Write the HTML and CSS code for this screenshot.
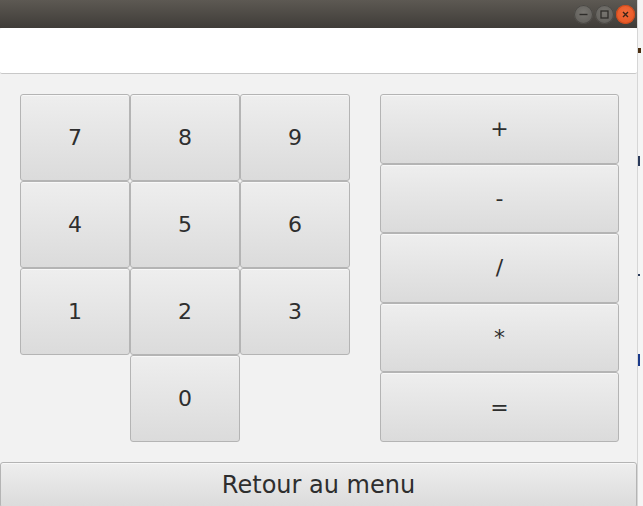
FILE: index.html
```html
<!DOCTYPE html>
<html>
<head>
<meta charset="utf-8">
<link rel="stylesheet" href="styles.css">
</head>
<body>
<div class="screen">
  <div class="window">
    <div class="titlebar">
      <span class="wbtn wmin"><svg width="19" height="19" viewBox="0 0 19 19"><line x1="5.5" y1="9.5" x2="13.5" y2="9.5" stroke="#2e2d2a" stroke-width="1.4"/></svg></span>
      <span class="wbtn wmax"><svg width="19" height="19" viewBox="0 0 19 19"><rect x="6" y="6" width="7" height="7" fill="none" stroke="#2e2d2a" stroke-width="1.3"/></svg></span>
      <span class="wbtn wclose"><svg width="19" height="19" viewBox="0 0 19 19"><path d="M7 7 L12 12 M12 7 L7 12" stroke="#3a2418" stroke-width="1.4"/></svg></span>
    </div>
    <div class="display"></div>
    <div class="main">
      <div class="numpad">
        <button class="btn">7</button>
        <button class="btn">8</button>
        <button class="btn">9</button>
        <button class="btn">4</button>
        <button class="btn">5</button>
        <button class="btn">6</button>
        <button class="btn">1</button>
        <button class="btn">2</button>
        <button class="btn">3</button>
        <button class="btn zero">0</button>
      </div>
      <div class="ops">
        <button class="btn">+</button>
        <button class="btn">-</button>
        <button class="btn">/</button>
        <button class="btn">*</button>
        <button class="btn">=</button>
      </div>
    </div>
    <button class="btn back">Retour au menu</button>
  </div>
  <div class="behind">
    <span class="mark m1"></span>
    <span class="mark m2"></span>
    <span class="mark m3"></span>
    <span class="mark m4"></span>
  </div>
</div>
</body>
</html>
```

FILE: styles.css
```css
html, body {
  margin: 0;
  padding: 0;
}
body {
  width: 643px;
  height: 506px;
  overflow: hidden;
  background: #f4f4f4;
  font-family: "DejaVu Sans", sans-serif;
}
.screen {
  display: flex;
  height: 506px;
}
.window {
  width: 637px;
  height: 506px;
  background: #f2f2f2;
  display: flex;
  flex-direction: column;
  flex: none;
}
.titlebar {
  height: 28px;
  flex: none;
  background: linear-gradient(#5d5953, #3f3c38);
  display: flex;
  justify-content: flex-end;
  align-items: center;
  gap: 2px;
  padding-right: 2px;
  box-sizing: border-box;
}
.wbtn {
  width: 19px;
  height: 19px;
  border-radius: 50%;
  display: flex;
  box-sizing: border-box;
}
.wmin, .wmax {
  background: radial-gradient(circle at 50% 40%, #777570, #5a5854);
  box-shadow: inset 0 0 0 1px #4a4844;
}
.wclose {
  background: radial-gradient(circle at 50% 40%, #f26b3a, #e2511f);
  box-shadow: inset 0 0 0 1px #c94a1e;
}
.display {
  height: 45px;
  flex: none;
  background: #ffffff;
  border-bottom: 1px solid #c8c8c8;
  border-radius: 2px;
}
.main {
  display: flex;
  padding: 20px 18px 0 20px;
  gap: 30px;
  height: 368px;
  box-sizing: border-box;
  flex: none;
}
.btn {
  margin: 0;
  border: 1px solid #b4b4b4;
  border-radius: 3px;
  background: linear-gradient(#eeeeee, #dbdbdb);
  box-shadow: inset 0 1px 0 #f8f8f8;
  color: #2e2e2e;
  font-family: "DejaVu Sans", sans-serif;
  font-size: 22px;
  padding: 0;
  box-sizing: border-box;
}
.numpad {
  display: grid;
  grid-template-columns: repeat(3, 110px);
  grid-template-rows: repeat(4, 87px);
}
.zero {
  grid-column: 2;
}
.ops {
  display: grid;
  grid-template-rows: repeat(5, 1fr);
  width: 239px;
  height: 348px;
}
.back {
  margin-top: 20px;
  height: 46px;
  width: 637px;
  font-size: 24px;
  padding-bottom: 0;
  flex: none;
}
.behind {
  flex: 1;
  border-left: 1px solid #d6d6d6;
  display: flex;
  flex-direction: column;
  align-items: flex-start;
  background: #f5f5f5;
}
.mark {
  display: block;
  width: 2px;
}
.m1 { margin-top: 48px; height: 5px; background: #4a2e10; width: 3px; }
.m2 { margin-top: 103px; height: 10px; background: #2a3a5a; }
.m3 { margin-top: 108px; height: 2px; background: #2a3a5a; }
.m4 { margin-top: 78px; height: 12px; background: #1a3a8a; }
```
